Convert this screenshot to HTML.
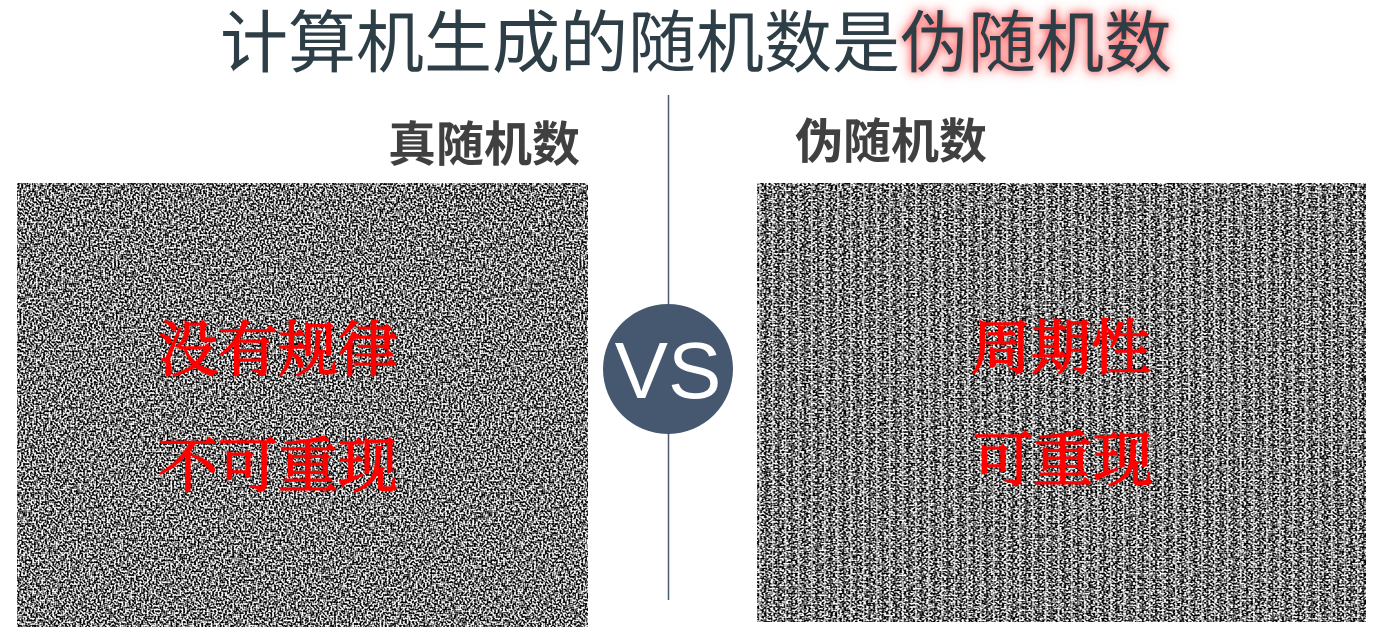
<!DOCTYPE html>
<html><head><meta charset="utf-8"><style>
body{margin:0;width:1384px;height:637px;background:#fff;position:relative;overflow:hidden;font-family:"Liberation Sans","Noto Sans CJK SC",sans-serif}
.t{position:absolute;top:2px;left:220px;font-size:68px;color:#2d3e47;white-space:nowrap;line-height:84px}
.g{text-shadow:0 0 8px #ff5a5a,0 0 14px #ff7b7b}
.h{position:absolute;font-size:48px;font-weight:bold;color:#404040;line-height:52px;white-space:nowrap}
.r{position:absolute;font-family:"Noto Serif CJK SC",serif;font-size:60px;color:#f00;-webkit-text-stroke:1.5px #f00;line-height:66px;white-space:nowrap}
</style></head><body>
<div class="t">计算机生成的随机数是<span class="g">伪随机数</span></div>
<div class="h" style="left:388px;top:120px">真随机数</div>
<div class="h" style="left:795px;top:117px">伪随机数</div>
<svg width="1384" height="637" style="position:absolute;left:0;top:0">
<defs>
<filter id="n" x="0" y="0" width="100%" height="100%">
<feTurbulence type="fractalNoise" baseFrequency="0.55" numOctaves="1" seed="3"/>
<feColorMatrix type="matrix" values="0 0 0 0 0  0 0 0 0 0  0 0 0 0 0  1 0 0 0 0"/>
<feComponentTransfer><feFuncA type="linear" slope="5" intercept="-1.97"/></feComponentTransfer>
</filter>
<filter id="n2" x="0" y="0" width="100%" height="100%">
<feTurbulence type="fractalNoise" baseFrequency="0.45 0.6" numOctaves="1" seed="7"/>
<feColorMatrix type="matrix" values="0 0 0 0 0  0 0 0 0 0  0 0 0 0 0  1 0 0 0 0"/>
<feComponentTransfer><feFuncA type="linear" slope="5" intercept="-1.97"/></feComponentTransfer>
</filter>
<pattern id="st" width="13" height="637" patternUnits="userSpaceOnUse" x="757">
<rect x="2" width="1.5" height="637" fill="#fff" opacity=".5"/>
<rect x="8" width="1.5" height="637" fill="#000" opacity=".4"/>
</pattern>
</defs>
<rect x="17" y="183" width="571" height="444" fill="#fff"/>
<rect x="17" y="183" width="571" height="444" filter="url(#n)"/>
<rect x="757" y="183" width="609" height="439" fill="#fff"/>
<rect x="757" y="183" width="609" height="439" filter="url(#n2)"/>
<rect x="757" y="183" width="609" height="439" fill="url(#st)"/>
<line x1="668.5" y1="95" x2="668.5" y2="600" stroke="#4a5a72" stroke-width="1.5"/>
<circle cx="668" cy="369" r="65" fill="#465770"/>
<text x="668" y="398" text-anchor="middle" font-family="Liberation Sans,sans-serif" font-size="80" fill="#fff">VS</text>
</svg>
<div class="r" style="left:158px;top:313px">没有规律</div>
<div class="r" style="left:158px;top:429px">不可重现</div>
<div class="r" style="left:971px;top:311px">周期性</div>
<div class="r" style="left:973px;top:423px">可重现</div>
</body></html>
